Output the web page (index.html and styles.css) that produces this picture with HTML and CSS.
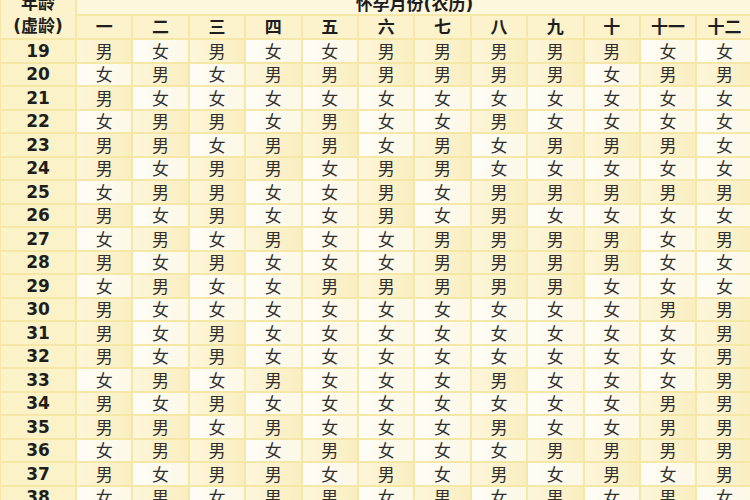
FILE: index.html
```html
<!DOCTYPE html>
<html lang="zh">
<head>
<meta charset="utf-8">
<title>清宫图</title>
<link rel="stylesheet" href="styles.css">
</head>
<body>
<div class="chart">
<table>
<colgroup><col class="c-age"><col span="12" class="c-mon"></colgroup>
<thead>
<tr class="hr1"><th class="age-h" rowspan="2">年龄<br>(虚龄)</th><th class="title" colspan="12">怀孕月份(农历)</th></tr>
<tr class="hr2"><th>一</th><th>二</th><th>三</th><th>四</th><th>五</th><th>六</th><th>七</th><th>八</th><th>九</th><th>十</th><th>十一</th><th>十二</th></tr>
</thead>
<tbody>
<tr><th>19</th><td class="m">男</td><td class="f">女</td><td class="m">男</td><td class="f">女</td><td class="f">女</td><td class="m">男</td><td class="m">男</td><td class="m">男</td><td class="m">男</td><td class="m">男</td><td class="f">女</td><td class="f">女</td></tr>
<tr><th>20</th><td class="f">女</td><td class="m">男</td><td class="f">女</td><td class="m">男</td><td class="m">男</td><td class="m">男</td><td class="m">男</td><td class="m">男</td><td class="m">男</td><td class="f">女</td><td class="m">男</td><td class="m">男</td></tr>
<tr><th>21</th><td class="m">男</td><td class="f">女</td><td class="f">女</td><td class="f">女</td><td class="f">女</td><td class="f">女</td><td class="f">女</td><td class="f">女</td><td class="f">女</td><td class="f">女</td><td class="f">女</td><td class="f">女</td></tr>
<tr><th>22</th><td class="f">女</td><td class="m">男</td><td class="m">男</td><td class="f">女</td><td class="m">男</td><td class="f">女</td><td class="f">女</td><td class="m">男</td><td class="f">女</td><td class="f">女</td><td class="f">女</td><td class="f">女</td></tr>
<tr><th>23</th><td class="m">男</td><td class="m">男</td><td class="f">女</td><td class="m">男</td><td class="m">男</td><td class="f">女</td><td class="m">男</td><td class="f">女</td><td class="m">男</td><td class="m">男</td><td class="m">男</td><td class="f">女</td></tr>
<tr><th>24</th><td class="m">男</td><td class="f">女</td><td class="m">男</td><td class="m">男</td><td class="f">女</td><td class="m">男</td><td class="m">男</td><td class="f">女</td><td class="f">女</td><td class="f">女</td><td class="f">女</td><td class="f">女</td></tr>
<tr><th>25</th><td class="f">女</td><td class="m">男</td><td class="m">男</td><td class="f">女</td><td class="f">女</td><td class="m">男</td><td class="f">女</td><td class="m">男</td><td class="m">男</td><td class="m">男</td><td class="m">男</td><td class="m">男</td></tr>
<tr><th>26</th><td class="m">男</td><td class="f">女</td><td class="m">男</td><td class="f">女</td><td class="f">女</td><td class="m">男</td><td class="f">女</td><td class="m">男</td><td class="f">女</td><td class="f">女</td><td class="f">女</td><td class="f">女</td></tr>
<tr><th>27</th><td class="f">女</td><td class="m">男</td><td class="f">女</td><td class="m">男</td><td class="f">女</td><td class="f">女</td><td class="m">男</td><td class="m">男</td><td class="m">男</td><td class="m">男</td><td class="f">女</td><td class="m">男</td></tr>
<tr><th>28</th><td class="m">男</td><td class="f">女</td><td class="m">男</td><td class="f">女</td><td class="f">女</td><td class="f">女</td><td class="m">男</td><td class="m">男</td><td class="m">男</td><td class="m">男</td><td class="f">女</td><td class="f">女</td></tr>
<tr><th>29</th><td class="f">女</td><td class="m">男</td><td class="f">女</td><td class="f">女</td><td class="m">男</td><td class="m">男</td><td class="m">男</td><td class="m">男</td><td class="m">男</td><td class="f">女</td><td class="f">女</td><td class="f">女</td></tr>
<tr><th>30</th><td class="m">男</td><td class="f">女</td><td class="f">女</td><td class="f">女</td><td class="f">女</td><td class="f">女</td><td class="f">女</td><td class="f">女</td><td class="f">女</td><td class="f">女</td><td class="m">男</td><td class="m">男</td></tr>
<tr><th>31</th><td class="m">男</td><td class="f">女</td><td class="m">男</td><td class="f">女</td><td class="f">女</td><td class="f">女</td><td class="f">女</td><td class="f">女</td><td class="f">女</td><td class="f">女</td><td class="f">女</td><td class="m">男</td></tr>
<tr><th>32</th><td class="m">男</td><td class="f">女</td><td class="m">男</td><td class="f">女</td><td class="f">女</td><td class="f">女</td><td class="f">女</td><td class="f">女</td><td class="f">女</td><td class="f">女</td><td class="f">女</td><td class="m">男</td></tr>
<tr><th>33</th><td class="f">女</td><td class="m">男</td><td class="f">女</td><td class="m">男</td><td class="f">女</td><td class="f">女</td><td class="f">女</td><td class="m">男</td><td class="f">女</td><td class="f">女</td><td class="f">女</td><td class="m">男</td></tr>
<tr><th>34</th><td class="m">男</td><td class="f">女</td><td class="m">男</td><td class="f">女</td><td class="f">女</td><td class="f">女</td><td class="f">女</td><td class="f">女</td><td class="f">女</td><td class="f">女</td><td class="m">男</td><td class="m">男</td></tr>
<tr><th>35</th><td class="m">男</td><td class="m">男</td><td class="f">女</td><td class="m">男</td><td class="f">女</td><td class="f">女</td><td class="f">女</td><td class="m">男</td><td class="f">女</td><td class="f">女</td><td class="m">男</td><td class="m">男</td></tr>
<tr><th>36</th><td class="f">女</td><td class="m">男</td><td class="m">男</td><td class="f">女</td><td class="m">男</td><td class="f">女</td><td class="f">女</td><td class="f">女</td><td class="m">男</td><td class="m">男</td><td class="m">男</td><td class="m">男</td></tr>
<tr><th>37</th><td class="m">男</td><td class="f">女</td><td class="m">男</td><td class="m">男</td><td class="f">女</td><td class="m">男</td><td class="f">女</td><td class="m">男</td><td class="f">女</td><td class="m">男</td><td class="f">女</td><td class="m">男</td></tr>
<tr><th>38</th><td class="f">女</td><td class="m">男</td><td class="f">女</td><td class="m">男</td><td class="m">男</td><td class="f">女</td><td class="m">男</td><td class="f">女</td><td class="m">男</td><td class="f">女</td><td class="m">男</td><td class="f">女</td></tr>
</tbody>
</table>
</div>
</body>
</html>
```

FILE: styles.css
```css
html, body {
  margin: 0;
  padding: 0;
  background: #fffdf4;
  overflow: hidden;
}

.chart {
  margin-top: -11px;
  margin-left: -1px;
}

table {
  border-collapse: collapse;
  table-layout: fixed;
  width: 753px;
}

.c-age { width: 76px; }
.c-mon { width: 56.4px; }

th, td {
  border: 2px solid #f5e7a6;
  padding: 0;
  height: 21.5px;
  text-align: center;
  vertical-align: middle;
  line-height: 20px;
}

th {
  font-family: "DejaVu Sans", "Noto Sans CJK SC", sans-serif;
  font-weight: bold;
  font-size: 17px;
  color: #1e1e1e;
  background: #fcf2c8;
}

thead th {
  font-size: 17px;
  background: #fcf3cd;
}

.hr1 .title {
  background: #fdf7de;
  vertical-align: bottom;
}

.age-h {
  line-height: 23px;
  padding-top: 1px;
}

td {
  font-family: "Noto Sans CJK SC", sans-serif;
  font-size: 17px;
  color: #2f2f2f;
}

td.m {
  background: linear-gradient(to right, #fdf6da, #faeec0);
}

td.f {
  background: linear-gradient(to right, #fefdf6, #fdf8e6);
}
```
